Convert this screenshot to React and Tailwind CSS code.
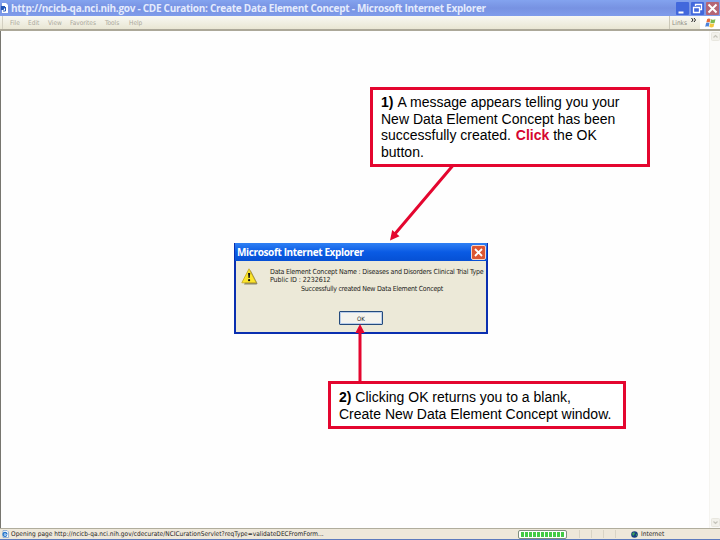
import React from "react";

const ui = "font-['DejaVu_Sans_Condensed','DejaVu_Sans',sans-serif]";

function TitleBar() {
  return (
    <header className="flex h-4 shrink-0 items-center bg-linear-to-b from-[#83a3ef] via-[#7792e2] to-[#7f9ceb]">
      <svg className="ml-px h-3 w-2 shrink-0" viewBox="0 0 8 12">
        <path d="M1 1h4l2 2v8H1z" fill="#fff" />
        <path d="M0 4h4v1.5L2.5 8H0z" fill="#2457b8" />
        <path d="M4.5 5v4H2" fill="none" stroke="#2457b8" />
      </svg>
      <h1 className="ml-0.5 whitespace-nowrap font-['Open_Sans',sans-serif] text-[10px] leading-4 font-bold tracking-[-0.275px] text-[#e4ebfd]">
        http://ncicb-qa.nci.nih.gov - CDE Curation: Create Data Element Concept - Microsoft Internet Explorer
      </h1>
      <div className="ml-auto flex gap-0.5 pr-px">
        <svg className="h-[13px] w-[13px]" viewBox="0 0 13 13">
          <rect width="13" height="13" rx="1" fill="#4268dc" />
          <path d="M2.5 10.5h5" stroke="#fff" strokeWidth="2" />
        </svg>
        <svg className="h-[13px] w-[13px]" viewBox="0 0 13 13">
          <rect width="13" height="13" rx="1" fill="#4268dc" />
          <path d="M4.5 4V2.5h6v5H9M2.5 5.5h6v5h-6z" fill="none" stroke="#fff" strokeWidth="1.3" />
        </svg>
        <svg className="h-[13px] w-[13px]" viewBox="0 0 13 13">
          <rect width="13" height="13" rx="1" fill="#b46575" />
          <path d="M2.5 2.5l8 8m0-8l-8 8" stroke="#fff" strokeWidth="2" />
        </svg>
      </div>
    </header>
  );
}

function MenuBar() {
  return (
    <nav className={`${ui} flex h-[15px] shrink-0 border-b-2 border-b-[#aca899] bg-linear-to-b from-[#f8f8f3] to-[#e9e6d3] text-[6.500px] leading-[14px] text-[#aaa89b]`}>
      <div className="ml-0.5 flex gap-[8px] border-l border-[#d3d0c2] pl-[7px] whitespace-nowrap">
        <span className="w-[10px]">File</span>
        <span className="w-[12px]">Edit</span>
        <span className="w-[14px]">View</span>
        <span className="w-[27px] tracking-[-0.050px]">Favorites</span>
        <span className="w-[16px]">Tools</span>
        <span>Help</span>
      </div>
      <div className="ml-auto flex w-[31px] justify-between border-l border-[#cbc8b8] pl-[2px] pr-1">
        <span className="text-[6.500px] text-[#8d8b82]">Links</span>
        <svg className="mt-[2px] h-1 w-[5px]" viewBox="0 0 5 4">
          <path d="M.5 0l1.500 2-1.500 2M3 0l1.500 2L3 4" fill="none" stroke="#222" />
        </svg>
      </div>
      <div className="flex w-5 items-center justify-center bg-white">
        <svg className="h-[10px] w-[11px]" viewBox="0 0 10 9">
          <path d="M2 .8Q3.500 0 5 .8L4.200 4Q3 3.300 1.200 4z" fill="#e96c3c" />
          <path d="M5.500 1Q7.500 2 9.500 1.200L8.700 4.500Q6.500 5 4.800 4.200z" fill="#7dba4e" />
          <path d="M1 4.500Q2.700 3.700 4.100 4.500L3.300 7.800Q2 7 .2 7.800z" fill="#4c83dc" />
          <path d="M4.700 4.800Q6.500 5.800 8.500 5L7.700 8.200Q5.500 9 3.900 8z" fill="#f4c63c" />
        </svg>
      </div>
    </nav>
  );
}

function ScrollButton({ d }) {
  return (
    <svg className="h-[9px] w-[9px]" viewBox="0 0 9 9">
      <rect x=".5" y=".5" width="8" height="8" rx="1" fill="#f2f1eb" stroke="#e8e7df" />
      <path d={d} fill="none" stroke="#c5c4bb" strokeWidth="1.2" />
    </svg>
  );
}

function StatusBar() {
  return (
    <footer className={`${ui} flex h-3 shrink-0 items-center border-t border-b border-t-[#b0ad9d] border-b-[#5d7bbd] bg-[#eee8da] text-[6.500px] leading-[10px] text-[#26251f]`}>
      <svg className="ml-[2px] h-2 w-[7px]" viewBox="0 0 7 8">
        <path d="M1 .5h4l1.500 1.500v5.500H1z" fill="#fff" stroke="#779bc8" strokeWidth=".7" />
        <path d="M4.800 5.300A2 2 0 1 1 5 4H1.500" fill="none" stroke="#2376cc" strokeWidth="1.200" />
      </svg>
      <span className="ml-[2px] w-[507px] tracking-[0.025px] whitespace-nowrap">
        Opening page http://ncicb-qa.nci.nih.gov/cdecurate/NCICurationServlet?reqType=validateDECFromForm...
      </span>
      <div className="flex h-[9px] w-[49px] items-center gap-px rounded-[2px] border border-[#7e8f7c] bg-white px-[2px]">
        {Array.from({ length: 11 }, (_, i) => (
          <i key={i} className="h-[5px] w-[3px] bg-[#42cb45]" />
        ))}
      </div>
      <div className="ml-3 flex h-2">
        {[0, 1, 2, 3].map((i) => (
          <i key={i} className="w-3 border-l border-[#d9d4c5]" />
        ))}
      </div>
      <svg className="ml-1 h-[7px] w-[7px]" viewBox="0 0 7 7">
        <circle cx="3.500" cy="3.500" r="3.300" fill="#173f80" />
        <path d="M1 2.500l2-1.500 1 1.500L3 4 2 5zM5 3l1.500.5L5 5.500z" fill="#39a05a" />
      </svg>
      <span className="ml-[3px]">Internet</span>
    </footer>
  );
}

function Dialog() {
  return (
    <section className="absolute top-[243px] left-[234px] flex h-[91px] w-[254px] flex-col border-x-2 border-b-2 border-[#0a2fb0] bg-[#ece9d8]">
      <div className="-mx-px flex h-[18px] shrink-0 items-center justify-between bg-linear-to-b from-[#2f80f4] via-[#0a5be4] to-[#0650d4] pr-px pl-[2px]">
        <h2 className="pt-px font-['Open_Sans',sans-serif] text-[10px] font-bold tracking-[-0.370px] whitespace-nowrap text-white">Microsoft Internet Explorer</h2>
        <svg className="h-[15px] w-[15px]" viewBox="0 0 15 15">
          <rect x=".5" y=".5" width="14" height="14" rx="1.500" fill="#dc5633" stroke="#f3d6d0" />
          <path d="M4 4l7 7m0-7l-7 7" stroke="#fff" strokeWidth="1.800" />
        </svg>
      </div>
      <div className="flex">
        <svg className="mt-[7px] ml-[5px] h-[17px] w-[17px] shrink-0" viewBox="0 0 17 17">
          <path d="M9.500 2L16.500 15.500l-1 1H3z" fill="#88856f" />
          <path d="M8 .8L15.300 14.800H.8z" fill="#fbe52b" stroke="#c5a71a" strokeWidth=".8" strokeLinejoin="round" />
          <path d="M7 5h2.200l-.5 5H7.500z" fill="#111" />
          <circle cx="8.100" cy="12.200" r="1.100" fill="#111" />
        </svg>
        <div className={`${ui} mt-[7px] ml-[12px] text-[7px] leading-[8.300px] tracking-[-0.200px] whitespace-nowrap text-[#1c1c18]`}>
          <p>Data Element Concept Name : Diseases and Disorders Clinical Trial Type</p>
          <p className="tracking-[-0.050px]">Public ID : 2232612</p>
          <p className="pl-[31px] tracking-[-0.260px]">Successfully created New Data Element Concept</p>
        </div>
      </div>
      <button className={`${ui} mt-auto mb-[7px] ml-[103px] h-[14px] w-[44px] rounded-[1px] border border-[#244a7c] bg-[#f4f3ee] text-[6px] leading-[11px] text-[#222] shadow-[inset_0_0_0_1px_#b9cdea]`}>
        OK
      </button>
    </section>
  );
}

const callout = "absolute border-[3px] border-[#e4062f] bg-white font-['Liberation_Sans',Arial,sans-serif] text-[14px] leading-[16.700px] whitespace-nowrap text-black";

export default function App() {
  return (
    <div className="relative flex h-[540px] w-[720px] flex-col overflow-hidden bg-[#fefefe]">
      <TitleBar />
      <MenuBar />
      <main className="flex min-h-0 flex-1 justify-end border-l border-[#77766f]">
        <div className="flex w-[11px] flex-col items-center justify-between border-l border-[#f5f4f0] bg-[#fbfbf9] py-px">
          <ScrollButton d="M2.500 5.500l2-2 2 2" />
          <ScrollButton d="M2.500 3.500l2 2 2-2" />
        </div>
      </main>
      <StatusBar />
      <Dialog />
      <div className={`${callout} top-[87px] left-[370px] h-[80px] w-[280px] pt-[4px] pl-[8px]`}>
        <p><b className="mr-px">1)</b> A message appears telling you your</p>
        <p>New Data Element Concept has been</p>
        <p>successfully created. <b className="ml-px text-[#d5062f]">Click</b> the OK</p>
        <p>button.</p>
      </div>
      <div className={`${callout} top-[381px] left-[328px] h-[48px] w-[298px] pt-[5px] pl-[8px]`}>
        <p><b>2)</b> Clicking OK returns you to a blank,</p>
        <p>Create New Data Element Concept window.</p>
      </div>
      <svg className="pointer-events-none absolute inset-0" width="720" height="540" viewBox="0 0 720 540">
        <path d="M452.500 166L394 235M360 382v-52" stroke="#e4062f" strokeWidth="3" />
        <path d="M390 240.500l2.200-10.500 7.300 6.300zM360 324l4.700 9h-9.400z" fill="#e4062f" />
      </svg>
    </div>
  );
}
